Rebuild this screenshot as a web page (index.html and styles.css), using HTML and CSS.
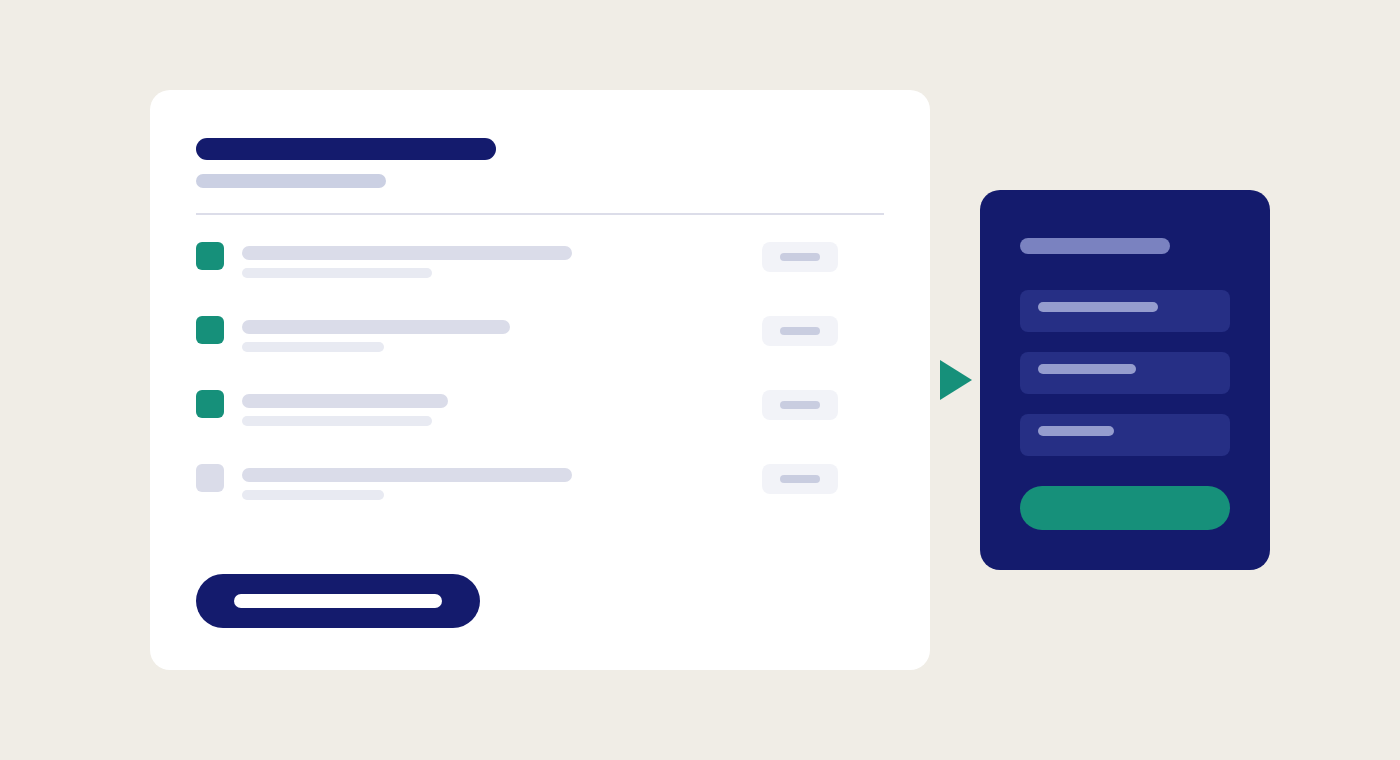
FILE: index.html
```html
<!DOCTYPE html>
<html>
<head>
<meta charset="utf-8">
<link rel="stylesheet" href="styles.css">
</head>
<body>
<div class="scene">
  <div class="card">
    <div class="title"></div>
    <div class="subtitle"></div>
    <div class="divider"></div>
    <div class="rows">
      <div class="row">
        <div class="check on"></div>
        <div class="text"><div class="l1" style="width:330px"></div><div class="l2" style="width:190px"></div></div>
        <div class="badge"><div class="bbar"></div></div>
      </div>
      <div class="row">
        <div class="check on"></div>
        <div class="text"><div class="l1" style="width:268px"></div><div class="l2" style="width:142px"></div></div>
        <div class="badge"><div class="bbar"></div></div>
      </div>
      <div class="row">
        <div class="check on"></div>
        <div class="text"><div class="l1" style="width:206px"></div><div class="l2" style="width:190px"></div></div>
        <div class="badge"><div class="bbar"></div></div>
      </div>
      <div class="row">
        <div class="check"></div>
        <div class="text"><div class="l1" style="width:330px"></div><div class="l2" style="width:142px"></div></div>
        <div class="badge"><div class="bbar"></div></div>
      </div>
    </div>
    <div class="btn"><div class="btnbar"></div></div>
  </div>
  <svg class="arrow" width="32" height="40" viewBox="0 0 32 40"><polygon points="0,0 32,20 0,40" fill="#16907a"/></svg>
  <div class="panel">
    <div class="ptitle"></div>
    <div class="items">
      <div class="item"><div class="ibar" style="width:120px"></div></div>
      <div class="item"><div class="ibar" style="width:98px"></div></div>
      <div class="item"><div class="ibar" style="width:76px"></div></div>
    </div>
    <div class="pbtn"></div>
  </div>
</div>
</body>
</html>
```
FILE: styles.css
```css
html, body {
  margin: 0;
  padding: 0;
  background: #f0ede6;
  width: 1400px;
  height: 760px;
  overflow: hidden;
  font-family: "Liberation Sans", sans-serif;
}
.scene {
  display: flex;
  align-items: center;
  padding-left: 150px;
  height: 760px;
}
.card {
  width: 780px;
  height: 580px;
  box-sizing: border-box;
  background: #ffffff;
  border-radius: 20px;
  padding: 48px 46px 42px 46px;
  display: flex;
  flex-direction: column;
}
.title {
  width: 300px;
  height: 22px;
  border-radius: 11px;
  background: #141b6d;
}
.subtitle {
  width: 190px;
  height: 14px;
  border-radius: 7px;
  background: #cbd0e3;
  margin-top: 14px;
}
.divider {
  height: 2px;
  background: #dcdde9;
  margin-top: 25px;
}
.rows {
  margin-top: 27px;
  display: flex;
  flex-direction: column;
  gap: 38px;
}
.row {
  display: flex;
  align-items: flex-start;
  height: 36px;
}
.check {
  width: 28px;
  height: 28px;
  border-radius: 6px;
  background: #dadce9;
  flex: none;
}
.check.on { background: #16907a; }
.text {
  flex: 1;
  margin-left: 18px;
  padding-top: 4px;
  display: flex;
  flex-direction: column;
  gap: 8px;
}
.l1 {
  height: 14px;
  border-radius: 7px;
  background: #dadce9;
}
.l2 {
  height: 10px;
  border-radius: 5px;
  background: #e8eaf2;
}
.badge {
  width: 76px;
  height: 30px;
  border-radius: 8px;
  background: #f2f3f8;
  margin-right: 46px;
  display: flex;
  align-items: center;
  justify-content: center;
  flex: none;
}
.bbar {
  width: 40px;
  height: 8px;
  border-radius: 4px;
  background: #c9cde0;
}
.btn {
  margin-top: auto;
  width: 284px;
  height: 54px;
  border-radius: 27px;
  background: #141b6d;
  display: flex;
  align-items: center;
  padding-left: 38px;
  box-sizing: border-box;
}
.btnbar {
  width: 208px;
  height: 14px;
  border-radius: 7px;
  background: #ffffff;
}
.arrow {
  margin-left: 10px;
  margin-right: 8px;
  flex: none;
  display: block;
}
.panel {
  width: 290px;
  height: 380px;
  box-sizing: border-box;
  background: #141b6d;
  border-radius: 20px;
  padding: 48px 40px 40px 40px;
  display: flex;
  flex-direction: column;
}
.ptitle {
  width: 150px;
  height: 16px;
  border-radius: 8px;
  background: #7a82c0;
}
.items {
  margin-top: 36px;
  display: flex;
  flex-direction: column;
  gap: 20px;
}
.item {
  height: 42px;
  box-sizing: border-box;
  border-radius: 8px;
  background: #262f85;
  padding: 12px 18px;
}
.ibar {
  height: 10px;
  border-radius: 5px;
  background: #959dce;
}
.pbtn {
  margin-top: 30px;
  height: 44px;
  border-radius: 22px;
  background: #16907a;
}
```
